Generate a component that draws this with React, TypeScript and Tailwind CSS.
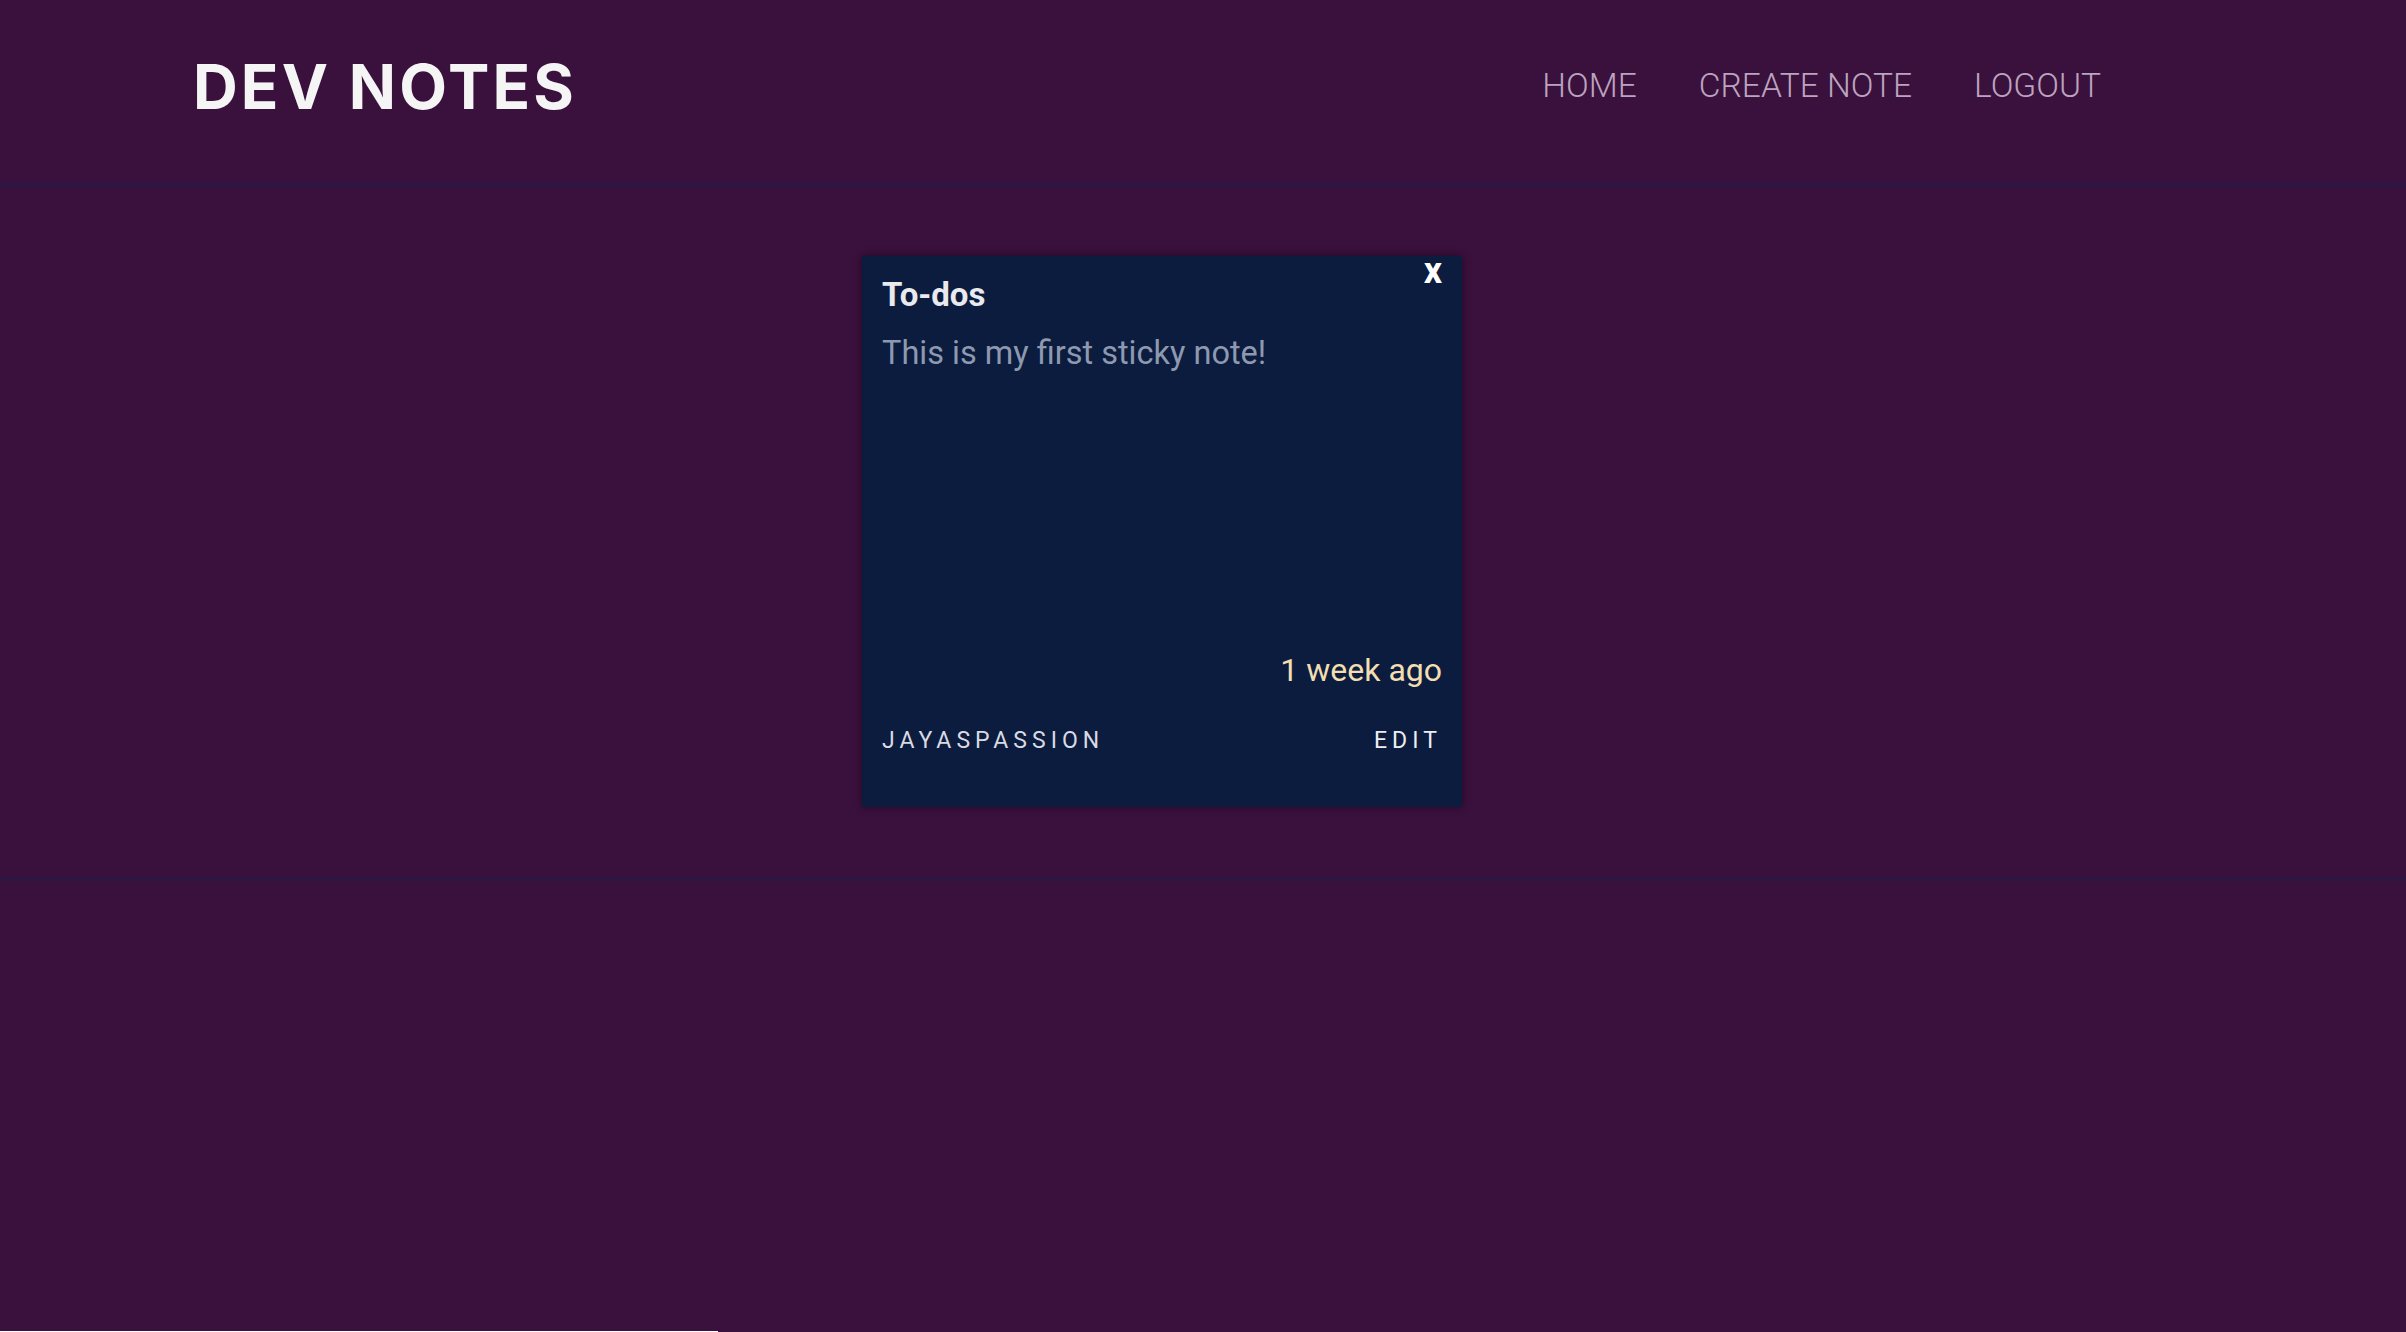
import React from 'react';

const notes = [
  {
    id: 1,
    title: 'To-dos',
    body: 'This is my first sticky note!',
    time: '1 week ago',
    author: 'jayaspassion',
  },
];

function NoteCard({ note }: { note: (typeof notes)[number] }) {
  return (
    <div className="relative flex h-[551px] w-[600px] flex-col bg-[#0b1c3f] px-5 pt-5 pb-[53px] shadow-[0_0_8px_rgba(0,0,0,0.45)]">
      <span className="absolute top-[-6px] right-5 text-[36px] font-bold leading-[42px] text-white">x</span>
      <h3 className="text-[33px] font-bold leading-[38px] text-[#e9e9ee]">{note.title}</h3>
      <p className="mt-5 flex-1 text-[32.5px] leading-[38px] text-[#8e99b0]">{note.body}</p>
      <div className="text-right text-[32px] leading-[38px] text-[#f2deb0]">{note.time}</div>
      <div className="mt-[38px] flex items-center justify-between text-[23px] uppercase leading-[27px] tracking-[0.22em] text-[#d9dae2]">
        <span>{note.author}</span>
        <span className="text-[#eeeef2]">Edit</span>
      </div>
    </div>
  );
}

export default function App() {
  return (
    <div className="flex min-h-[1332px] flex-col bg-[#3a103d] font-['Roboto',sans-serif]">
      {/* Top bar */}
      <header className="flex h-[187px] items-center justify-between border-b-4 border-[#2c1744] pb-[10px] pl-[193px] pr-[305px]">
        <h1 className="font-['Inter',sans-serif] text-[62px] font-bold tracking-[0.05em] text-[#f5f5f5]">
          DEV NOTES
        </h1>
        <nav className="flex items-center gap-[62px] text-[33.5px] font-light text-[#bba4bf]">
          <a href="#">HOME</a>
          <a href="#">CREATE NOTE</a>
          <a href="#">LOGOUT</a>
        </nav>
      </header>

      {/* Notes */}
      <main className="flex border-b-4 border-[#2c1744] pt-[69px] pb-[70px] pl-[862px]">
        {notes.map((n) => (
          <NoteCard key={n.id} note={n} />
        ))}
      </main>

      <div className="flex-1" />
      <div className="h-px w-[718px] bg-white" />
    </div>
  );
}
